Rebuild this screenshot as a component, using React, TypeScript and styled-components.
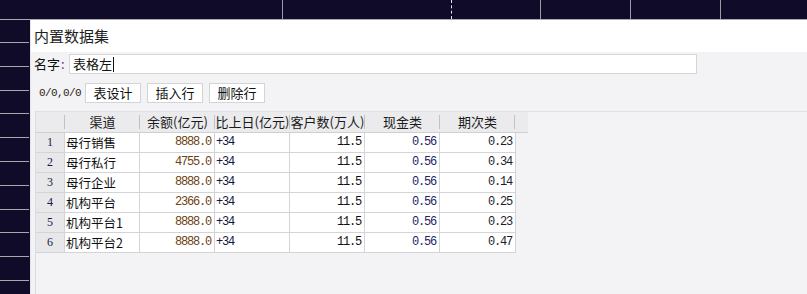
import styled, { createGlobalStyle } from 'styled-components'

const GlobalStyle = createGlobalStyle`
    html, body {
        margin: 0;
        padding: 0;
        background: #0f0b29;
        overflow: hidden;
    }
    * {
        box-sizing: border-box;
    }
`

interface Row {
    name: string
    balance: string
    delta: string
    clients: string
    cash: string
    term: string
}

const rows: Row[] = [
    { name: '母行销售', balance: '8888.0', delta: '+34', clients: '11.5', cash: '0.56', term: '0.23' },
    { name: '母行私行', balance: '4755.0', delta: '+34', clients: '11.5', cash: '0.56', term: '0.34' },
    { name: '母行企业', balance: '8888.0', delta: '+34', clients: '11.5', cash: '0.56', term: '0.14' },
    { name: '机构平台', balance: '2366.0', delta: '+34', clients: '11.5', cash: '0.56', term: '0.25' },
    { name: '机构平台1', balance: '8888.0', delta: '+34', clients: '11.5', cash: '0.56', term: '0.23' },
    { name: '机构平台2', balance: '8888.0', delta: '+34', clients: '11.5', cash: '0.56', term: '0.47' },
]

const headers = ['渠道', '余额(亿元)', '比上日(亿元)', '客户数(万人)', '现金类', '期次类']

// top strip cells of the dashboard behind the dialog
const topCells = [
    { w: 283, dash: false },
    { w: 169, dash: true },
    { w: 89, dash: false },
    { w: 90, dash: false },
    { w: 90, dash: false },
    { w: 86, dash: false },
]

export default function App() {
    return (
        <>
            <GlobalStyle />
            <Screen>
                <TopBar>
                    {topCells.map((c, i) => (
                        <TopCell key={i} $w={c.w} $dash={c.dash} $last={i === topCells.length - 1} />
                    ))}
                </TopBar>
                <Body>
                    <LeftStrip>
                        {Array.from({ length: 11 }).map((_, i) => (
                            <LeftCell key={i} />
                        ))}
                    </LeftStrip>
                    <Panel>
                        <TitleBar>内置数据集</TitleBar>
                        <NameRow>
                            <Label>
                                名字<Colon>:</Colon>
                            </Label>
                            <NameInput>
                                表格左
                                <Caret />
                            </NameInput>
                        </NameRow>
                        <Toolbar>
                            <Counter>0/0,0/0</Counter>
                            <ToolButton>表设计</ToolButton>
                            <ToolButton>插入行</ToolButton>
                            <ToolButton>删除行</ToolButton>
                        </Toolbar>
                        <TableArea>
                            <HeaderRow>
                                <HeadCell />
                                {headers.map((h) => (
                                    <HeadCell key={h}>{h}</HeadCell>
                                ))}
                            </HeaderRow>
                            <Grid>
                                {rows.map((r, i) => (
                                    <DataRow key={r.name}>
                                        <IndexCell>{i + 1}</IndexCell>
                                        <TextCell>{r.name}</TextCell>
                                        <NumCell $color="#6e4210">{r.balance}</NumCell>
                                        <NumCell $color="#16163a" $left>
                                            {r.delta}
                                        </NumCell>
                                        <NumCell $color="#111">{r.clients}</NumCell>
                                        <NumCell $color="#1c2466">{r.cash}</NumCell>
                                        <NumCell $color="#1d1d2e">{r.term}</NumCell>
                                    </DataRow>
                                ))}
                            </Grid>
                        </TableArea>
                    </Panel>
                </Body>
            </Screen>
        </>
    )
}

const Screen = styled.div`
    width: 807px;
    height: 294px;
    display: flex;
    flex-direction: column;
    background: #0f0b29;
    font-family: 'Noto Sans CJK SC', 'Noto Sans', sans-serif;
`

const TopBar = styled.div`
    display: flex;
    height: 20px;
    border-bottom: 1px solid #a9a9b0;
    flex-shrink: 0;
`

const TopCell = styled.div<{ $w: number; $dash: boolean; $last: boolean }>`
    width: ${({ $w }) => $w}px;
    height: 19px;
    border-right: ${({ $dash, $last }) =>
        $last ? 'none' : $dash ? '1px dashed #e8e8f0' : '1px solid #9c9ca6'};
`

const Body = styled.div`
    flex: 1;
    display: flex;
    min-height: 0;
`

const LeftStrip = styled.div`
    width: 30px;
    display: flex;
    flex-direction: column;
    padding-top: 22px;
    padding-right: 1px;
`

const LeftCell = styled.div`
    height: 23.8px;
    border-top: 1px solid #a6a6ae;
    flex-shrink: 0;
`

const Panel = styled.div`
    flex: 1;
    display: flex;
    flex-direction: column;
    background: #f3f3f5;
    border-left: 1px solid #e4e4ea;
`

const TitleBar = styled.div`
    height: 32px;
    background: #fff;
    padding: 6px 0 0 3px;
    font-size: 15px;
    line-height: 20px;
    color: #1e1e24;
`

const NameRow = styled.div`
    display: flex;
    align-items: flex-start;
    height: 22px;
    padding: 2px 0 0 3px;
`

const Label = styled.span`
    width: 35px;
    font-size: 13px;
    line-height: 19px;
    color: #111;
`

const Colon = styled.span`
    color: #7b2d86;
    margin-left: 1px;
`

const NameInput = styled.div`
    width: 628px;
    height: 20px;
    background: #fff;
    border: 1px solid #d6d6d8;
    padding-left: 3px;
    font-size: 13px;
    line-height: 18px;
    color: #111;
    display: flex;
    align-items: center;
`

const Caret = styled.span`
    display: inline-block;
    width: 1px;
    height: 15px;
    background: #111;
    margin-left: 1px;
`

const Toolbar = styled.div`
    display: flex;
    align-items: center;
    gap: 6px;
    height: 20px;
    margin-top: 9px;
    padding-left: 8px;
`

const Counter = styled.span`
    font-family: 'Liberation Mono', monospace;
    font-size: 11px;
    letter-spacing: -0.6px;
    color: #2a2416;
    width: 40px;
`

const ToolButton = styled.div`
    width: 56px;
    height: 20px;
    background: #fff;
    border: 1px solid #d4d4d6;
    font-size: 13px;
    line-height: 18px;
    text-align: center;
    color: #111;
`

const TableArea = styled.div`
    flex: 1;
    margin: 8px 0 0 4px;
    border-left: 1px solid #dcdce0;
    border-top: 1px solid #e0e0e4;
    display: flex;
    flex-direction: column;
`

const columns = '29px repeat(6, 75px)'

const HeaderRow = styled.div`
    display: grid;
    grid-template-columns: ${columns} 13px;
    width: 492px;
    height: 21px;
    background: #ebebed;
    border-bottom: 1px solid #d0d0d2;
`

const HeadCell = styled.div`
    position: relative;
    font-size: 13px;
    line-height: 20px;
    text-align: center;
    color: #1a1a1a;
    white-space: nowrap;
    overflow: hidden;

    &::after {
        content: '';
        position: absolute;
        right: 0;
        top: 3px;
        height: 14px;
        border-right: 1px solid #c2c2c6;
    }
`

const Grid = styled.div`
    display: flex;
    flex-direction: column;
    width: 480px;
    border-right: 1px solid #d4d4d6;
`

const DataRow = styled.div`
    display: grid;
    grid-template-columns: ${columns};
    height: 20px;
    border-bottom: 1px solid #d4d4d6;
`

const IndexCell = styled.div`
    background: #e8e8ea;
    border-right: 1px solid #d4d4d6;
    font-family: 'Liberation Serif', serif;
    font-size: 12px;
    line-height: 19px;
    text-align: center;
    color: #1a1a44;
`

const TextCell = styled.div`
    background: #fff;
    border-right: 1px solid #d4d4d6;
    font-size: 12.5px;
    line-height: 19px;
    padding-left: 1px;
    color: #111;
    white-space: nowrap;
`

const NumCell = styled.div<{ $color: string; $left?: boolean }>`
    background: #fff;
    border-right: 1px solid #d4d4d6;
    font-family: 'Liberation Mono', monospace;
    font-size: 12px;
    letter-spacing: -1.2px;
    line-height: 19px;
    padding: 0 3px 0 1px;
    text-align: ${({ $left }) => ($left ? 'left' : 'right')};
    color: ${({ $color }) => $color};

    &:last-child {
        border-right: none;
    }
`
